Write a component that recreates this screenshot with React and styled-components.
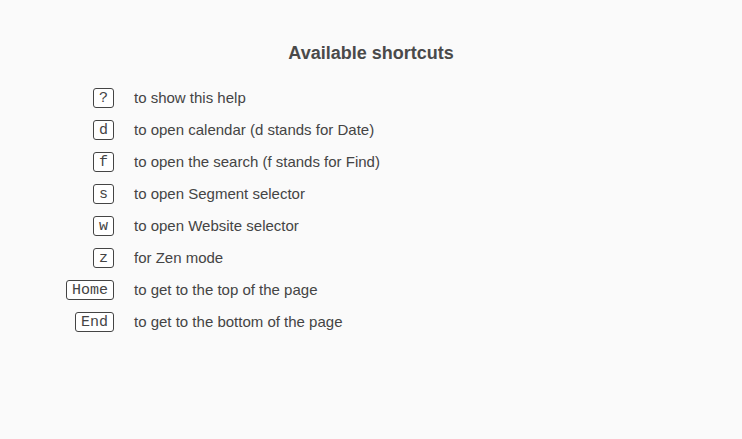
import React from 'react';
import styled, { createGlobalStyle } from 'styled-components';

const GlobalStyle = createGlobalStyle`
  html, body {
    margin: 0;
    padding: 0;
    background: #fafafa;
  }
  body {
    font-family: "Liberation Sans", Arial, sans-serif;
    color: #444;
  }
`;

const Panel = styled.div`
  width: 742px;
  height: 439px;
  box-sizing: border-box;
  padding-top: 42px;
  background: #fafafa;
  border-radius: 2px;
`;

const Title = styled.h2`
  margin: 0 0 24px;
  text-align: center;
  font-size: 18px;
  font-weight: bold;
  line-height: 22px;
  color: #4a4a4a;
`;

const List = styled.dl`
  margin: 0;
  display: grid;
  grid-template-columns: 114px auto;
  column-gap: 20px;
  row-gap: 12px;
  align-items: center;
`;

const Key = styled.dt`
  display: flex;
  justify-content: flex-end;
  margin: 0;
`;

const Kbd = styled.kbd`
  display: block;
  box-sizing: border-box;
  height: 20px;
  padding: 1px 5px 0;
  border: 1px solid #444;
  border-radius: 3px;
  font-family: "Liberation Mono", "Courier New", monospace;
  font-size: 15px;
  line-height: 17px;
  color: #444;
  background: #fff;
`;

const Desc = styled.dd`
  margin: 0;
  font-size: 15px;
  line-height: 20px;
  color: #444;
`;

const shortcuts = [
  ['?', 'to show this help'],
  ['d', 'to open calendar (d stands for Date)'],
  ['f', 'to open the search (f stands for Find)'],
  ['s', 'to open Segment selector'],
  ['w', 'to open Website selector'],
  ['z', 'for Zen mode'],
  ['Home', 'to get to the top of the page'],
  ['End', 'to get to the bottom of the page'],
];

export default function App() {
  return (
    <>
      <GlobalStyle />
      <Panel>
        <Title>Available shortcuts</Title>
        <List>
          {shortcuts.map(([key, text]) => (
            <React.Fragment key={key}>
              <Key><Kbd>{key}</Kbd></Key>
              <Desc>{text}</Desc>
            </React.Fragment>
          ))}
        </List>
      </Panel>
    </>
  );
}
